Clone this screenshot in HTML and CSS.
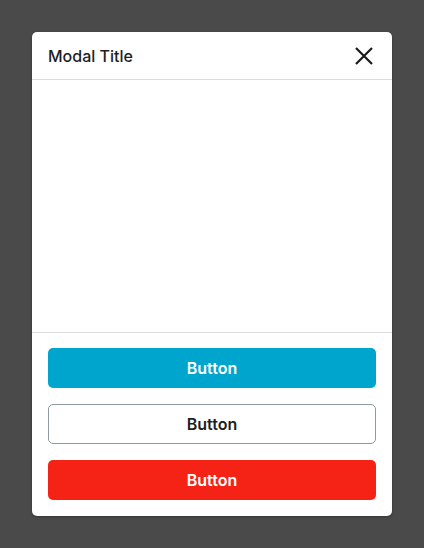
FILE: index.html
```html
<!DOCTYPE html>
<html lang="en">
<head>
    <meta charset="UTF-8">
    <meta name="viewport" content="width=device-width, initial-scale=1.0">
    <title>Modal</title>
    <link rel="stylesheet" href="styles.css">
</head>
<body>
    <div class="modal">
        <div class="modal-header">
            <h2 class="modal-title">Modal Title</h2>
            <span class="close">
                <svg width="20" height="20" viewBox="0 0 20 20">
                    <path d="M2 2 L18 18 M18 2 L2 18" stroke="#1a1a1a" stroke-width="2.2" fill="none"/>
                </svg>
            </span>
        </div>
        <div class="modal-body"></div>
        <div class="modal-footer">
            <button class="btn btn-primary">Button</button>
            <button class="btn btn-outline">Button</button>
            <button class="btn btn-danger">Button</button>
        </div>
    </div>
</body>
</html>
```

FILE: styles.css
```css
body {
    font-family: 'Inter', 'Noto Sans', sans-serif;
    background-color: #4a4a4a;
    margin: 0;
    padding: 32px;
    min-height: 548px;
    box-sizing: border-box;
}

.modal {
    background-color: #fff;
    width: 360px;
    border-radius: 5px;
    box-shadow: 0 1px 3px rgba(0, 0, 0, 0.3);
    overflow: hidden;
}

.modal-header {
    height: 47px;
    padding: 0 16px;
    display: flex;
    justify-content: space-between;
    align-items: center;
    border-bottom: 1px solid #dcdcdc;
}

.modal-title {
    margin: 0;
    font-size: 16px;
    font-weight: 500;
    color: #1e1e1e;
}

.close {
    display: flex;
    margin-right: 2px;
    cursor: pointer;
}

.modal-body {
    height: 252px;
    border-bottom: 1px solid #dcdcdc;
}

.modal-footer {
    padding: 15px 16px 16px;
    display: flex;
    flex-direction: column;
    gap: 16px;
}

.btn {
    height: 40px;
    border-radius: 5px;
    border: none;
    font-family: inherit;
    font-size: 16px;
    font-weight: 600;
    cursor: pointer;
}

.btn-primary {
    background-color: #00a5ce;
    color: #fff;
}

.btn-outline {
    background-color: #fff;
    color: #1e1e1e;
    border: 1px solid #8e9aa2;
}

.btn-danger {
    background-color: #f52316;
    color: #fff;
}
```
